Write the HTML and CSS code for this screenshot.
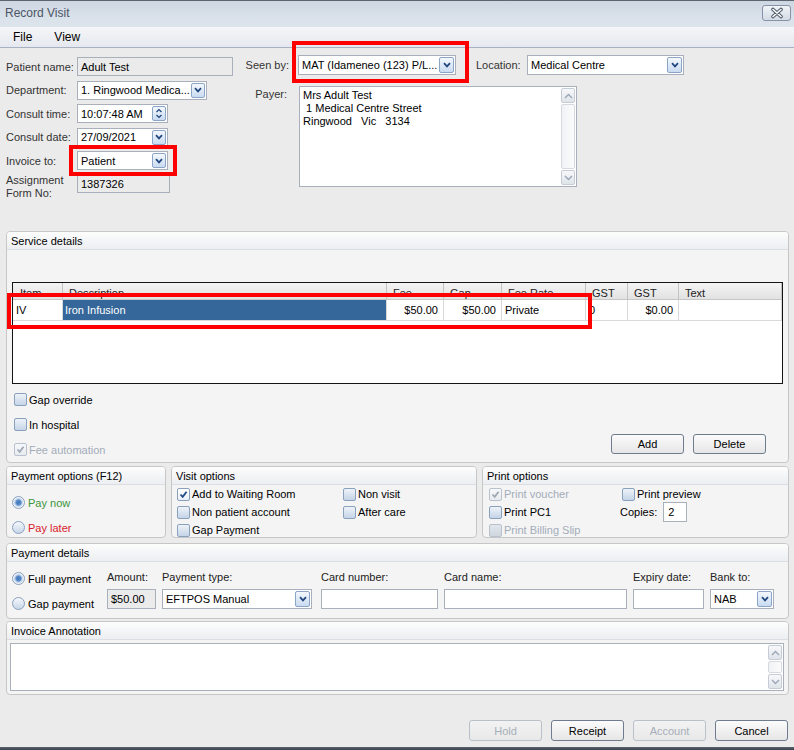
FILE: index.html
```html
<!DOCTYPE html>
<html lang="en">
<head>
<meta charset="utf-8">
<title>Record Visit</title>
<link rel="stylesheet" href="styles.css">
</head>
<body>
<div class="window">
  <header class="titlebar">
    <span class="title">Record Visit</span>
    <button class="close" aria-label="Close"><svg width="16" height="12" viewBox="0 0 16 12"><path d="M4 2.5 L12 9.5 M12 2.5 L4 9.5" stroke="#4f5968" stroke-width="3.6" stroke-linecap="round"/><path d="M4 2.5 L12 9.5 M12 2.5 L4 9.5" stroke="#ffffff" stroke-width="1.6" stroke-linecap="round"/></svg></button>
  </header>
  <nav class="menubar"><span>File</span><span>View</span></nav>

  <main class="content">
    <section class="top">
      <div class="patient">
        <span class="lbl">Patient name:</span>
        <div class="fld ro w156">Adult Test</div>
        <span class="lbl">Department:</span>
        <div class="fld w130"><span class="val">1. Ringwood Medica...</span><span class="dd"><svg width="8" height="6" viewBox="0 0 8 6"><path d="M1 1.2 L4 4.4 L7 1.2" fill="none" stroke="#20467e" stroke-width="1.7"/></svg></span></div>
        <span class="lbl">Consult time:</span>
        <div class="fld w91"><span class="val">10:07:48 AM</span><span class="dd spin"><svg width="8" height="11" viewBox="0 0 8 11"><path d="M1.5 4 L4 1.6 L6.5 4 M1.5 7 L4 9.4 L6.5 7" fill="none" stroke="#20467e" stroke-width="1.3"/></svg></span></div>
        <span class="lbl">Consult date:</span>
        <div class="fld w91"><span class="val">27/09/2021</span><span class="dd"><svg width="8" height="6" viewBox="0 0 8 6"><path d="M1 1.2 L4 4.4 L7 1.2" fill="none" stroke="#20467e" stroke-width="1.7"/></svg></span></div>
        <span class="lbl">Invoice to:</span>
        <div class="fld w91"><span class="val">Patient</span><span class="dd"><svg width="8" height="6" viewBox="0 0 8 6"><path d="M1 1.2 L4 4.4 L7 1.2" fill="none" stroke="#20467e" stroke-width="1.7"/></svg></span></div>
        <span class="lbl lbl2">Assignment<br>Form No:</span>
        <div class="fld ro w93 h18">1387326</div>
      </div>

      <div class="visit">
        <div class="seen-row">
          <span class="mlbl">Seen by:</span>
          <div class="fld w158 h20"><span class="val">MAT (Idameneo (123) P/L...</span><span class="dd dd-tall"><svg width="8" height="6" viewBox="0 0 8 6"><path d="M1 1.2 L4 4.4 L7 1.2" fill="none" stroke="#20467e" stroke-width="1.7"/></svg></span></div>
          <span class="loc-lbl">Location:</span>
          <div class="fld w157 h20"><span class="val">Medical Centre</span><span class="dd dd-tall"><svg width="8" height="6" viewBox="0 0 8 6"><path d="M1 1.2 L4 4.4 L7 1.2" fill="none" stroke="#20467e" stroke-width="1.7"/></svg></span></div>
        </div>
        <div class="payer-row">
          <span class="mlbl plbl">Payer:</span>
          <div class="memo payer">
            <div class="memo-text">Mrs Adult Test
 1 Medical Centre Street
Ringwood   Vic   3134</div>
            <div class="vscroll">
              <span class="sb"><svg width="9" height="6" viewBox="0 0 9 6"><path d="M1 5 L4.5 1.5 L8 5" fill="none" stroke="#9aa6b6" stroke-width="1.4"/></svg></span>
              <span class="track"></span>
              <span class="sb"><svg width="9" height="6" viewBox="0 0 9 6"><path d="M1 1 L4.5 4.5 L8 1" fill="none" stroke="#9aa6b6" stroke-width="1.4"/></svg></span>
            </div>
          </div>
        </div>
      </div>
    </section>

    <section class="panel service">
      <div class="phead">Service details</div>
      <div class="svc-body">
        <div class="grid">
          <div class="grow ghead"><span>Item</span><span>Description</span><span>Fee</span><span>Gap</span><span>Fee Rate</span><span>GST</span><span>GST</span><span>Text</span></div>
          <div class="grow gdata"><span>IV</span><span class="sel">Iron Infusion</span><span class="num">$50.00</span><span class="num">$50.00</span><span>Private</span><span>0</span><span class="num">$0.00</span><span></span></div>
        </div>
        <div class="svc-lower">
          <div class="chks">
            <div class="chk"><span class="cb"></span>Gap override</div>
            <div class="chk"><span class="cb"></span>In hospital</div>
            <div class="chk dis"><span class="cb on"><svg width="9" height="9" viewBox="0 0 9 9"><path d="M1.5 4.5 L3.7 6.8 L7.6 1.8" fill="none" stroke="#9ea8b6" stroke-width="1.8"/></svg></span>Fee automation</div>
          </div>
          <div class="btns"><button class="btn">Add</button><button class="btn">Delete</button></div>
        </div>
      </div>
    </section>

    <div class="opts">
      <section class="panel popt">
        <div class="phead">Payment options (F12)</div>
        <div class="radios">
          <div class="radio-row green"><span class="rb on"></span>Pay now</div>
          <div class="radio-row red"><span class="rb"></span>Pay later</div>
        </div>
      </section>
      <section class="panel vopt">
        <div class="phead">Visit options</div>
        <div class="cgrid vgrid">
          <div class="chk"><span class="cb on"><svg width="9" height="9" viewBox="0 0 9 9"><path d="M1.5 4.5 L3.7 6.8 L7.6 1.8" fill="none" stroke="#1f4a86" stroke-width="1.8"/></svg></span>Add to Waiting Room</div>
          <div class="chk"><span class="cb"></span>Non visit</div>
          <div class="chk"><span class="cb"></span>Non patient account</div>
          <div class="chk"><span class="cb"></span>After care</div>
          <div class="chk"><span class="cb"></span>Gap Payment</div>
        </div>
      </section>
      <section class="panel prt">
        <div class="phead">Print options</div>
        <div class="cgrid pgrid">
          <div class="chk dis"><span class="cb on"><svg width="9" height="9" viewBox="0 0 9 9"><path d="M1.5 4.5 L3.7 6.8 L7.6 1.8" fill="none" stroke="#9ea8b6" stroke-width="1.8"/></svg></span>Print voucher</div>
          <div class="chk col2"><span class="cb"></span>Print preview</div>
          <div class="chk"><span class="cb"></span>Print PC1</div>
          <div class="copies"><span>Copies:</span><span class="cp">2</span></div>
          <div class="chk dis"><span class="cb dcb"></span>Print Billing Slip</div>
        </div>
      </section>
    </div>

    <section class="panel paydet">
      <div class="phead">Payment details</div>
      <div class="pd-body">
        <div class="pd-radios">
          <div class="radio-row"><span class="rb on"></span>Full payment</div>
          <div class="radio-row"><span class="rb"></span>Gap payment</div>
        </div>
        <div class="pf"><span class="pfl">Amount:</span><div class="fld ro w49 h20">$50.00</div></div>
        <div class="pf ml6"><span class="pfl">Payment type:</span><div class="fld w150 h20"><span class="val">EFTPOS Manual</span><span class="dd dd-tall"><svg width="8" height="6" viewBox="0 0 8 6"><path d="M1 1.2 L4 4.4 L7 1.2" fill="none" stroke="#20467e" stroke-width="1.7"/></svg></span></div></div>
        <div class="pf ml9"><span class="pfl">Card number:</span><div class="fld w117 h20"></div></div>
        <div class="pf ml6"><span class="pfl">Card name:</span><div class="fld w183 h20"></div></div>
        <div class="pf ml6"><span class="pfl">Expiry date:</span><div class="fld w71 h20"></div></div>
        <div class="pf ml6"><span class="pfl">Bank to:</span><div class="fld w64 h20"><span class="val">NAB</span><span class="dd dd-tall"><svg width="8" height="6" viewBox="0 0 8 6"><path d="M1 1.2 L4 4.4 L7 1.2" fill="none" stroke="#20467e" stroke-width="1.7"/></svg></span></div></div>
      </div>
    </section>

    <section class="panel annot">
      <div class="phead">Invoice Annotation</div>
      <div class="annot-body">
        <div class="memo annot-memo">
          <div class="memo-text"></div>
          <div class="vscroll">
            <span class="sb"><svg width="9" height="6" viewBox="0 0 9 6"><path d="M1 5 L4.5 1.5 L8 5" fill="none" stroke="#9aa6b6" stroke-width="1.4"/></svg></span>
            <span class="track"></span>
            <span class="sb"><svg width="9" height="6" viewBox="0 0 9 6"><path d="M1 1 L4.5 4.5 L8 1" fill="none" stroke="#9aa6b6" stroke-width="1.4"/></svg></span>
          </div>
        </div>
      </div>
    </section>

    <div class="actions">
      <button class="btn h21 dis">Hold</button>
      <button class="btn h21">Receipt</button>
      <button class="btn h21 dis">Account</button>
      <button class="btn h21">Cancel</button>
    </div>
  </main>
  <div class="bottom-edge"></div>

  <div class="hl hl-invoice"></div>
  <div class="hl hl-seen"></div>
  <div class="hl hl-row"></div>
</div>
</body>
</html>
```

FILE: styles.css
```css
* { box-sizing: border-box; margin: 0; padding: 0; }
html, body { margin: 0; background: #ebebeb; }
body { font-family: "Liberation Sans", Arial, sans-serif; font-size: 11px; color: #000; }
button { font: inherit; color: inherit; cursor: default; }

.window { position: relative; width: 794px; height: 750px; display: flex; flex-direction: column; background: #ebebeb; overflow: hidden; }

.titlebar { height: 27px; flex: none; border-top: 1px solid #5e6672; background: linear-gradient(#cdd7e2, #d9e1ea 60%, #dde4ec); display: flex; align-items: center; justify-content: space-between; padding: 0 3px 2px 5px; }
.title { font-size: 12px; color: #4b5563; }
.close { width: 29px; height: 16px; border: 1px solid #8693a6; border-radius: 3px; background: linear-gradient(#f1f4f8, #d3dbe5); display: flex; align-items: center; justify-content: center; }
.menubar { height: 21px; flex: none; display: flex; align-items: center; gap: 22px; padding-left: 13px; font-size: 12px; background: linear-gradient(#f5f6f9, #e5e8ee); border-bottom: 1px solid #a7b1c1; }

.content { flex: 1; display: flex; flex-direction: column; padding-left: 6px; }

.top { height: 183px; flex: none; display: flex; align-items: flex-start; }
.patient { margin-top: 9px; display: grid; grid-template-columns: 71px 156px; grid-auto-rows: 19px; row-gap: 4.6px; align-items: center; }
.lbl { color: #333; white-space: nowrap; }
.lbl2 { align-self: start; line-height: 13px; margin-top: -1px; }

.fld { height: 19px; border: 1px solid #a9b0bb; background: #fff; display: flex; align-items: center; justify-content: space-between; padding: 0 1px 0 3px; white-space: nowrap; overflow: hidden; }
.ro { background: #ebebeb; }
.w156 { width: 156px; } .w130 { width: 130px; } .w91 { width: 91px; } .w93 { width: 93px; }
.w158 { width: 158px; } .w157 { width: 157px; } .w49 { width: 49px; } .w150 { width: 150px; }
.w117 { width: 117px; } .w183 { width: 183px; } .w71 { width: 71px; } .w64 { width: 64px; }
.h18 { height: 18px; } .h20 { height: 20px; }
.dd { width: 14px; height: 15px; border: 1px solid #8ba5c7; border-radius: 2px; background: linear-gradient(#f4f8fd, #c9dbf1); display: flex; align-items: center; justify-content: center; flex: none; }
.dd-tall { height: 16px; width: 15px; }

.visit { margin-left: 9px; margin-top: 7px; display: flex; flex-direction: column; }
.seen-row { display: flex; align-items: center; }
.mlbl { width: 56px; padding-right: 9px; text-align: right; color: #333; }
.loc-lbl { margin-left: 20px; width: 51px; color: #333; }
.payer-row { display: flex; margin-top: 11px; }
.plbl { padding-right: 11px; padding-top: 2px; }

.memo { display: flex; border: 1px solid #a9b0bb; background: #fff; }
.payer { width: 278px; height: 101px; margin-left: 1px; }
.memo-text { flex: 1; padding: 2px 3px; line-height: 13px; white-space: pre; }
.vscroll { width: 16px; display: flex; flex-direction: column; padding: 1px; gap: 1px; }
.sb { height: 15px; flex: none; border: 1px solid #c6ccd5; border-radius: 2px; background: linear-gradient(#f7f8fa, #dfe4ea); display: flex; align-items: center; justify-content: center; }
.track { flex: 1; border: 1px solid #d6dae0; border-radius: 2px; background: linear-gradient(90deg, #f1f2f4, #fbfbfb); }

.panel { background: #f4f4f4; border: 1px solid #c7c7c7; border-radius: 4px; display: flex; flex-direction: column; overflow: hidden; flex: none; }
.phead { height: 18px; flex: none; padding-left: 4px; display: flex; align-items: center; background: linear-gradient(#fdfdfd, #eceef1); border-bottom: 1px solid #dbdfe4; }

.service { width: 783px; height: 232px; }
.svc-body { padding: 32px 0 0 5px; }
.grid { width: 771px; height: 102px; border: 1px solid #141414; background: #fff; }
.grow { display: grid; grid-template-columns: 50px 324px 57px 58px 84px 42px 51px 1fr; }
.ghead { height: 17px; background: linear-gradient(#f4f4f4, #e2e2e2); border-bottom: 1px solid #c6c6c6; }
.ghead span { border-right: 1px solid #c3c3c3; padding-left: 6px; padding-top: 2px; line-height: 16px; color: #222; overflow: hidden; }
.ghead span:first-child { padding-left: 7px; }
.gdata { height: 21px; border-bottom: 1px solid #d9d9d9; }
.gdata span { border-right: 1px solid #d9d9d9; line-height: 20px; padding: 0 3px; white-space: nowrap; }
.gdata .num { text-align: right; padding-right: 5px; }
.gdata .sel { background: #35679a; color: #fff; padding-left: 2px; }

.svc-lower { display: flex; justify-content: space-between; align-items: flex-end; padding: 9px 22px 0 2px; }
.chks { display: flex; flex-direction: column; gap: 12px; }
.chk { display: flex; align-items: center; gap: 2px; height: 13px; white-space: nowrap; }
.chk.dis { color: #a3acba; }
.cb { width: 13px; height: 13px; flex: none; border: 1px solid #8aa0bd; border-radius: 2px; background: linear-gradient(#eef3f9, #c5d4e7); display: flex; align-items: center; justify-content: center; }
.cb.on { background: linear-gradient(#ffffff, #e9eff7); }
.dis .cb { border-color: #b8c1cd; }
.dis .cb.on { background: linear-gradient(#f7f8fa, #e8ebef); }
.dcb { background: linear-gradient(#e2e6ec, #cfd6df); }
.btns { display: flex; gap: 9px; margin-bottom: 2px; }
.btn { width: 73px; height: 20px; border: 1px solid #6f7c8e; border-radius: 3px; background: linear-gradient(#fbfbfb, #e6e6e6); display: flex; align-items: center; justify-content: center; }
.btn.h21 { height: 21px; }
.btn.dis { color: #a6aeb9; border-color: #b9c0ca; background: linear-gradient(#f2f2f2, #e9e9e9); }

.opts { display: flex; gap: 5px; margin-top: 3px; height: 72px; flex: none; }
.popt { width: 160px; height: 72px; }
.vopt { width: 306px; height: 72px; }
.prt { width: 307px; height: 72px; }
.radios { display: flex; flex-direction: column; gap: 12px; padding: 11px 0 0 5px; }
.radio-row { display: flex; align-items: center; gap: 3px; height: 13px; white-space: nowrap; }
.rb { width: 13px; height: 13px; flex: none; border-radius: 50%; border: 1px solid #8aa0bd; background: linear-gradient(#f5f8fc, #c7d6e9); }
.rb.on { background: radial-gradient(circle, #3f74b5 0, #5b8ecb 2.5px, #b6cce8 3.6px, #f0f4f9 5px); }
.green { color: #3a953a; }
.red { color: #d8202b; }
.cgrid { display: grid; grid-template-rows: repeat(3, 18px); align-items: center; }
.vgrid { grid-template-columns: 166px 1fr; padding-left: 5px; }
.pgrid { grid-template-columns: 131px 1fr; padding-left: 6px; }
.col2 { margin-left: 2px; }
.copies { display: flex; align-items: center; gap: 6px; }
.cp { width: 24px; height: 20px; border: 1px solid #a9b0bb; background: #fff; padding-left: 4px; line-height: 18px; }

.paydet { width: 783px; height: 76px; margin-top: 5px; }
.pd-body { display: flex; }
.pd-radios { width: 100px; padding: 10px 0 0 5px; display: flex; flex-direction: column; gap: 12px; }
.pf { display: flex; flex-direction: column; padding-top: 8px; }
.pfl { height: 14px; line-height: 14px; margin-bottom: 5px; color: #222; white-space: nowrap; }
.ml6 { margin-left: 6px; }
.ml9 { margin-left: 9px; }

.annot { width: 783px; height: 74px; margin-top: 2px; }
.annot-body { padding: 3px 0 0 3px; }
.annot-memo { width: 774px; height: 48px; }

.actions { display: flex; justify-content: flex-end; gap: 9px; margin-top: 25px; width: 782px; }

.bottom-edge { height: 3px; flex: none; background: linear-gradient(#5b636e, #3b424c); }

.hl { position: absolute; border: 4px solid #ff0000; pointer-events: none; }
.hl-invoice { left: 69px; top: 145px; width: 108px; height: 31px; }
.hl-seen { left: 292px; top: 41px; width: 177px; height: 42px; }
.hl-row { left: 7px; top: 293px; width: 585px; height: 36px; }
```
